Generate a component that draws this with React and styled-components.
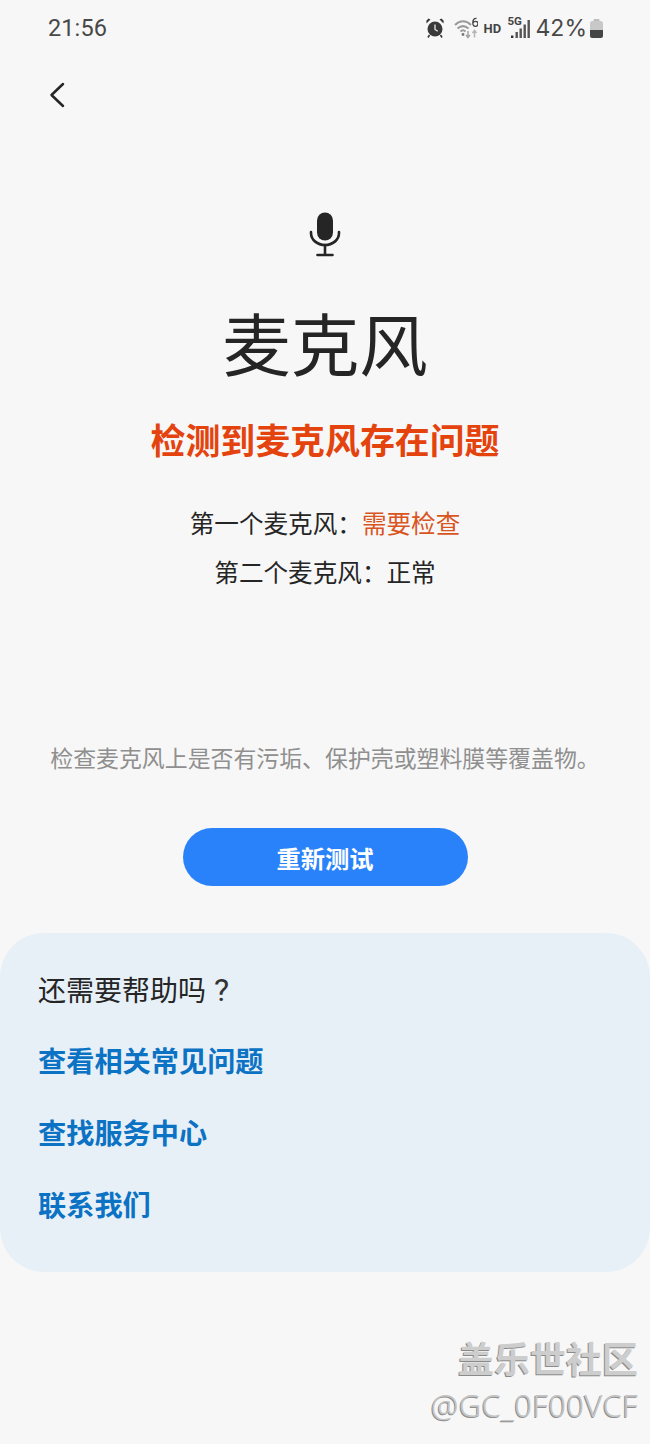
import React from "react";
import styled, { createGlobalStyle } from "styled-components";

const Global = createGlobalStyle`
  html, body { margin: 0; padding: 0; background: #f7f7f7; }
  * { box-sizing: border-box; }
`;
const CJK = `"Noto Sans CJK SC", "Noto Sans", sans-serif`;

const Page = styled.div`
  position: relative;
  width: 650px;
  height: 1444px;
  overflow: hidden;
  background: #f7f7f7;
  font-family: ${CJK};
  color: #252525;
`;
const StatusBar = styled.header`
  height: 56px;
  padding: 0 47px 0 48px;
  display: flex;
  align-items: center;
  justify-content: space-between;
`;
const Clock = styled.span`
  font-family: Roboto, sans-serif;
  font-size: 23.5px;
  font-weight: 400;
  letter-spacing: 0.1px;
  color: #484848;
`;
const StatusIcons = styled.div`
  display: flex;
  align-items: center;
  color: #444;
`;
const WifiSlot = styled.span`
  display: flex;
  margin-left: 10px;
`;
const Hd = styled.span`
  font-family: Roboto, sans-serif;
  font-size: 13px;
  font-weight: 700;
  margin: 0 7px 0 6px;
  width: 17px;
`;
const Percent = styled.span`
  font-family: Inter, Roboto, sans-serif;
  font-size: 23px;
  font-weight: 400;
  color: #484848;
  margin: 0 3px 0 6px;
  white-space: nowrap;
`;
const BackRow = styled.nav`
  height: 78px;
  padding-left: 47px;
  display: flex;
  align-items: center;
`;
const Hero = styled.section`
  padding-top: 78px;
  display: flex;
  flex-direction: column;
  align-items: center;
`;
const Title = styled.h1`
  margin: 34px 0 0;
  font-size: 68.5px;
  line-height: 100px;
  font-weight: 400;
  color: #252525;
`;
const Alert = styled.h2`
  margin: 22px 0 0;
  font-size: 34.9px;
  line-height: 50px;
  font-weight: 700;
  color: #e4430e;
`;
const Status = styled.p`
  margin: ${(p) => p.$top}px 0 0;
  font-size: 24.6px;
  line-height: 36px;
  color: #252525;
`;
const Warn = styled.span`
  color: #d9541e;
`;
const Hint = styled.p`
  margin: 151px 0 0;
  font-size: 22.9px;
  line-height: 34px;
  color: #8f8f8f;
  white-space: nowrap;
`;
const Retry = styled.button`
  margin-top: 54px;
  width: 285px;
  height: 58px;
  border: 0;
  border-radius: 29px;
  background: #2a82fb;
  color: #fff;
  font-family: ${CJK};
  font-size: 24.3px;
  font-weight: 700;
`;
const HelpCard = styled.section`
  margin-top: 47px;
  height: 339px;
  border-radius: 44px;
  background: #e7f0f7;
  padding: 35px 38px 0;
  display: flex;
  flex-direction: column;
`;
const HelpTitle = styled.div`
  font-size: 28px;
  line-height: 42px;
  height: 64px;
  color: #252525;
`;
const HelpMark = styled.span`
  font-family: Roboto, sans-serif;
  font-weight: 400;
  font-size: 32px;
  color: #333;
  margin-left: 8px;
`;
const HelpLink = styled.a`
  font-size: 28.2px;
  line-height: 42px;
  height: 72px;
  padding-top: 7px;
  font-weight: 700;
  color: #0b72c4;
`;
const Watermark = styled.div`
  position: absolute;
  right: 12px;
  bottom: 21px;
  text-align: right;
`;
const WatermarkBrand = styled.div`
  font-size: 36px;
  line-height: 46px;
  font-weight: 700;
  color: #cdcdcd;
  text-shadow: -1px 1px 0 #8a8a8a;
`;
const WatermarkUser = styled.div`
  margin-top: 7px;
  font-family: "Noto Sans", sans-serif;
  font-size: 31.2px;
  font-weight: 300;
  line-height: 36px;
  letter-spacing: 0.2px;
  color: #c4c4c4;
  text-shadow: -1px 1px 0 #8f8f8f;
`;
const FiveG = styled.span`
  position: absolute;
  left: 0;
  top: -3px;
  font-family: Roboto, sans-serif;
  font-size: 11.5px;
  font-weight: 700;
  color: #444;
`;
const SignalWrap = styled.span`
  position: relative;
  display: flex;
`;

const AlarmIcon = () => (
  <svg width="18" height="20" viewBox="0 0 18 20" fill="#3a3a3a">
    <circle cx="9" cy="11" r="7.500" />
    <path d="M0.500 5.500 4.500 1.500 2.500 0.500 0.300 2.800ZM17.500 5.500 13.500 1.500 15.500 0.500 17.700 2.800Z" />
    <path d="M9 6.500v5l2.800 1.800" stroke="#e8e8e8" strokeWidth="1.300" fill="none" />
    <path d="M3.500 17 2 19.500M14.500 17l1.500 2.500" stroke="#3a3a3a" strokeWidth="1.600" />
  </svg>
);
const WifiIcon = () => (
  <svg width="24" height="22" viewBox="0 0 24 22" fill="none">
    <path d="M1 8C6 3 12 3 17 8" stroke="#9a9a9a" strokeWidth="2" />
    <path d="M3.500 11.500C7 8.500 11 8.500 14.500 11.500" stroke="#9a9a9a" strokeWidth="2" />
    <path d="M6.500 14.500C8 13 10 13 11.500 14.500" stroke="#9a9a9a" strokeWidth="2" />
    <circle cx="9" cy="17.500" r="1.400" fill="#777" />
    <path d="M14 14v6.500M12 18l2 2.500 2-2.500" stroke="#a5a5a5" strokeWidth="1.500" />
    <path d="M20.500 20.500v-6.500M18.500 16l2-2.500 2 2.500" stroke="#b5b5b5" strokeWidth="1.500" />
    <path d="M22.500 1.500C20.500 1 18.800 2.600 18.800 5.500C18.800 8 19.800 9.400 21.400 9.400C23 9.400 24 8.300 24 6.800C24 5.300 23 4.300 21.500 4.300C20.300 4.300 19.500 5 19 6" stroke="#444" strokeWidth="1.300" />
  </svg>
);
const SignalIcon = () => (
  <svg width="22" height="22" viewBox="0 0 22 22" fill="#555">
    <rect x="3" y="18.500" width="2.400" height="2.500" fill="#333" />
    <rect x="7.500" y="15" width="2.400" height="6" />
    <rect x="11.500" y="11.500" width="2.400" height="9.500" />
    <rect x="15.500" y="7.500" width="2.400" height="13.500" />
    <rect x="19.500" y="3" width="2.400" height="18" />
  </svg>
);
const BatteryIcon = () => (
  <svg width="13" height="19" viewBox="0 0 13 19">
    <rect x="3.500" y="0" width="6" height="3" rx="1" fill="#bdbdbd" />
    <rect x="0" y="2" width="13" height="17" rx="2.500" fill="#c8c8c8" />
    <path d="M0 11H13V16.500A2.500 2.500 0 0 1 10.500 19H2.500A2.500 2.500 0 0 1 0 16.500Z" fill="#454545" />
  </svg>
);
const BackIcon = () => (
  <svg width="20" height="30" viewBox="0 0 20 30" fill="none" stroke="#252525" strokeWidth="2.500" strokeLinecap="round" strokeLinejoin="round">
    <path d="M16 4 4.500 15 16 26" />
  </svg>
);
const MicIcon = () => (
  <svg width="32" height="46" viewBox="0 0 32 46" fill="none">
    <rect x="8" y="0.500" width="16" height="28" rx="8" fill="#252525" />
    <path d="M2 20V21C2 28 8.500 33 16 33C23.500 33 30 28 30 21V20" stroke="#252525" strokeWidth="2.600" strokeLinecap="round" />
    <path d="M16 33V43M8.500 43H23.500" stroke="#252525" strokeWidth="2.600" strokeLinecap="round" />
  </svg>
);

export default function App() {
  return (
    <Page>
      <Global />
      <StatusBar>
        <Clock>21:56</Clock>
        <StatusIcons>
          <AlarmIcon />
          <WifiSlot>
            <WifiIcon />
          </WifiSlot>
          <Hd>HD</Hd>
          <SignalWrap>
            <FiveG>5G</FiveG>
            <SignalIcon />
          </SignalWrap>
          <Percent>42%</Percent>
          <BatteryIcon />
        </StatusIcons>
      </StatusBar>
      <BackRow>
        <BackIcon />
      </BackRow>
      <Hero>
        <MicIcon />
        <Title>麦克风</Title>
        <Alert>检测到麦克风存在问题</Alert>
        <Status $top={40}>
          第一个麦克风：<Warn>需要检查</Warn>
        </Status>
        <Status $top={13}>第二个麦克风：正常</Status>
        <Hint>检查麦克风上是否有污垢、保护壳或塑料膜等覆盖物。</Hint>
        <Retry>重新测试</Retry>
      </Hero>
      <HelpCard>
        <HelpTitle>还需要帮助吗<HelpMark>?</HelpMark></HelpTitle>
        <HelpLink>查看相关常见问题</HelpLink>
        <HelpLink>查找服务中心</HelpLink>
        <HelpLink>联系我们</HelpLink>
      </HelpCard>
      <Watermark>
        <WatermarkBrand>盖乐世社区</WatermarkBrand>
        <WatermarkUser>@GC_0F00VCF</WatermarkUser>
      </Watermark>
    </Page>
  );
}
